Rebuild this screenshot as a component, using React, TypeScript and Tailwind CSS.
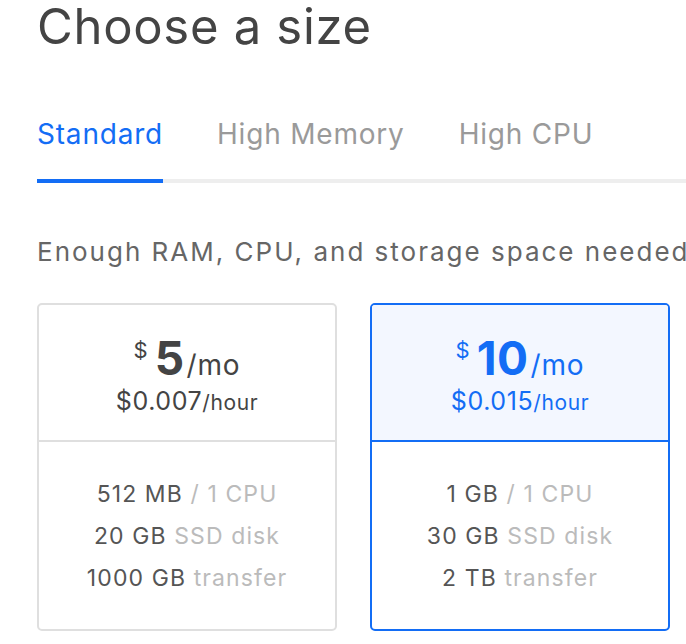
import React from "react";

const plans = [
  {
    price: "5",
    hourly: "$0.007",
    mem: "512 MB",
    disk: "20 GB",
    transfer: "1000 GB",
    active: false,
  },
  {
    price: "10",
    hourly: "$0.015",
    mem: "1 GB",
    disk: "30 GB",
    transfer: "2 TB",
    active: true,
  },
];

function PlanCard({ plan }: { plan: (typeof plans)[number] }) {
  const tone = plan.active ? "text-[#136df5]" : "text-[#444]";
  return (
    <div
      className={
        "w-[300px] h-[328px] flex flex-col rounded-[5px] border-2 overflow-hidden " +
        (plan.active ? "border-[#136df5]" : "border-[#dfdfdf]")
      }
    >
      <div
        className={
          "h-[137px] flex flex-col items-center pt-[30px] border-b-2 " +
          (plan.active ? "bg-[#f3f7ff] border-[#136df5]" : "border-[#dfdfdf]")
        }
      >
        <div className={"flex items-baseline leading-none " + tone}>
          <span className="text-[22px] self-start mt-[4px] mr-[7px]">$</span>
          <span className="text-[46px] font-bold tracking-[0.5px]">{plan.price}</span>
          <span className="text-[28px] ml-[2px] tracking-[0.8px]">/mo</span>
        </div>
        <div className={"flex items-baseline leading-none mt-[8px] tracking-[0.6px] " + tone}>
          <span className="text-[25px]">{plan.hourly}</span>
          <span className="text-[21px]">/hour</span>
        </div>
      </div>
      <div className="flex-1 flex flex-col items-center pt-[31px] text-[23px] leading-[42px] tracking-[1.1px]">
        <div>
          <span className="text-[#555]">{plan.mem}</span>
          <span className="text-[#bbb]"> / 1 CPU</span>
        </div>
        <div>
          <span className="text-[#555]">{plan.disk}</span>
          <span className="text-[#bbb]"> SSD disk</span>
        </div>
        <div>
          <span className="text-[#555]">{plan.transfer}</span>
          <span className="text-[#bbb]"> transfer</span>
        </div>
      </div>
    </div>
  );
}

export default function App() {
  return (
    <div className="w-[686px] h-[644px] overflow-hidden bg-white pl-[37px] font-['Inter',sans-serif]">
      <h1 className="text-[49px] leading-[54px] text-[#444] tracking-[0.7px] whitespace-nowrap">
        Choose a size
      </h1>

      {/* Tabs */}
      <div className="mt-[66px] flex gap-[54px] border-b-4 border-[#eee] text-[28px] leading-none tracking-[0.8px] whitespace-nowrap">
        <div className="pb-[31px] -mb-[4px] border-b-4 border-[#136df5] text-[#136df5]">
          Standard
        </div>
        <div className="pb-[31px] text-[#9a9a9a]">High Memory</div>
        <div className="pb-[31px] text-[#9a9a9a]">High CPU</div>
      </div>

      <p className="mt-[56px] text-[26px] leading-none text-[#666] tracking-[2px] whitespace-nowrap">
        Enough RAM, CPU, and storage space needed
      </p>

      <div className="mt-[38px] flex gap-[33px]">
        {plans.map((p) => (
          <PlanCard key={p.price} plan={p} />
        ))}
      </div>
    </div>
  );
}
